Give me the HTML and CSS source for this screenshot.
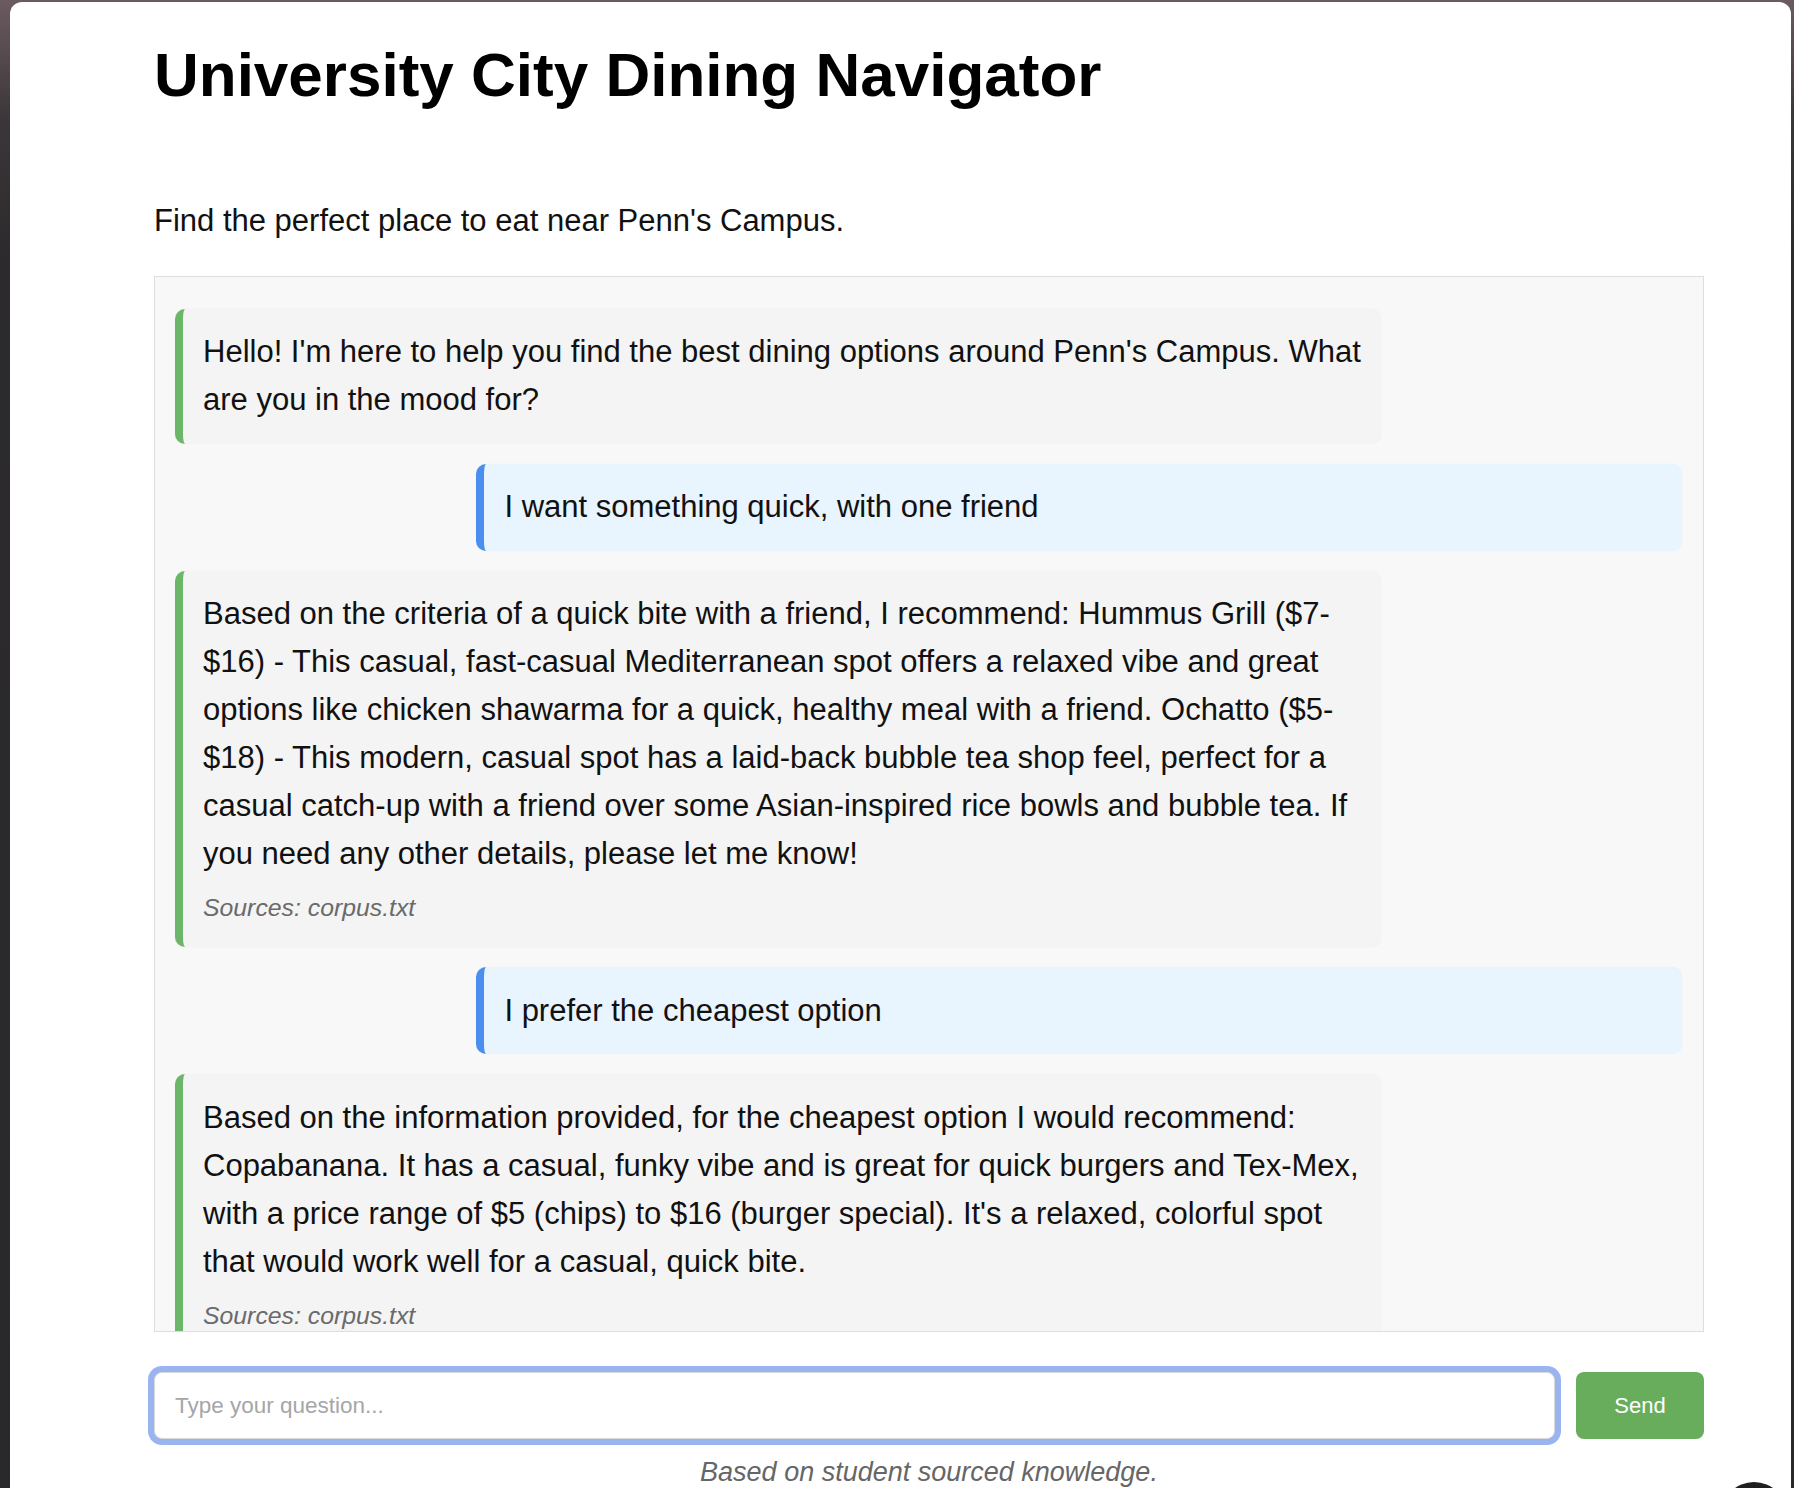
FILE: index.html
```html
<!DOCTYPE html>
<html lang="en">
<head>
<meta charset="utf-8">
<title>University City Dining Navigator</title>
<link rel="stylesheet" href="styles.css">
</head>
<body>
<div class="window">
  <main class="app">
    <h1 class="title">University City Dining Navigator</h1>
    <p class="subtitle">Find the perfect place to eat near Penn's Campus.</p>
    <div class="chat">
      <div class="msg bot">
        <div class="text">Hello! I'm here to help you find the best dining options around Penn's Campus. What are you in the mood for?</div>
      </div>
      <div class="msg user">
        <div class="text">I want something quick, with one friend</div>
      </div>
      <div class="msg bot">
        <div class="text">Based on the criteria of a quick bite with a friend, I recommend: Hummus Grill ($7-<wbr>$16) - This casual, fast-casual Mediterranean spot offers a relaxed vibe and great options like chicken shawarma for a quick, healthy meal with a friend. Ochatto ($5-<wbr>$18) - This modern, casual spot has a laid-back bubble tea shop feel, perfect for a casual catch-up with a friend over some Asian-inspired rice bowls and bubble tea. If you need any other details, please let me know!</div>
        <div class="sources">Sources: corpus.txt</div>
      </div>
      <div class="msg user">
        <div class="text">I prefer the cheapest option</div>
      </div>
      <div class="msg bot">
        <div class="text">Based on the information provided, for the cheapest option I would recommend: Copabanana. It has a casual, funky vibe and is great for quick burgers and Tex-Mex, with a price range of $5 (chips) to $16 (burger special). It's a relaxed, colorful spot that would work well for a casual, quick bite.</div>
        <div class="sources">Sources: corpus.txt</div>
      </div>
    </div>
    <form class="composer">
      <input class="input" type="text" placeholder="Type your question...">
      <button class="send" type="button">Send</button>
    </form>
    <p class="footnote">Based on student sourced knowledge.</p>
  </main>
</div>
<div class="fab"></div>
</body>
</html>
```
FILE: styles.css
```css
html, body {
  margin: 0;
  padding: 0;
}

body {
  width: 1794px;
  height: 1488px;
  overflow: hidden;
  position: relative;
  background: linear-gradient(180deg, #6b5b61 0, #3b3639 120px, #2c2a2c 260px, #29292b 100%);
  font-family: "Liberation Sans", Arial, sans-serif;
  color: #111;
}

.window {
  margin: 2px 3px 0 10px;
  height: 1486px;
  box-sizing: border-box;
  padding-top: 37px;
  background: #fff;
  border-radius: 12px 12px 0 0;
}

.app {
  margin-left: 144px;
  width: 1550px;
}

.title {
  margin: 0;
  font-size: 62px;
  line-height: 72px;
  font-weight: 700;
  color: #000;
}

.subtitle {
  margin: 86px 0 0;
  font-size: 31px;
  line-height: 48px;
  color: #111;
}

.chat {
  margin-top: 31px;
  height: 1056px;
  box-sizing: border-box;
  border: 1px solid #dedede;
  background: #f8f8f8;
  padding: 32px 21px 0 20px;
  overflow: hidden;
  display: flex;
  flex-direction: column;
  gap: 20px;
}

.msg {
  flex-shrink: 0;
  width: 80%;
  box-sizing: border-box;
  padding: 19.4px 18px 19.4px 20px;
  border-left: 8px solid;
  border-radius: 10px;
  font-size: 31px;
  line-height: 48px;
  color: #111;
  box-shadow: 0 0 1px rgba(0, 0, 0, 0.08);
}

.bot {
  align-self: flex-start;
  background: #f4f4f4;
  border-left-color: #6cb669;
}

.user {
  align-self: flex-end;
  background: #e8f4fe;
  border-left-color: #4a8ff0;
}

.sources {
  margin-top: 10px;
  font-size: 24.8px;
  line-height: 40px;
  font-style: italic;
  color: #6a6a6a;
}

.composer {
  margin: 40px 0 0;
  display: flex;
  gap: 21px;
}

.input {
  flex: 1;
  height: 67px;
  box-sizing: border-box;
  border: 1.5px solid #d9d9d9;
  border-radius: 8px;
  padding: 0 20px;
  font-family: "Liberation Sans", Arial, sans-serif;
  font-size: 22.5px;
  color: #111;
  background: #fff;
  outline: none;
  box-shadow: 0 0 0 6px #9ab4ef;
}

.input::placeholder {
  color: #a6a6a6;
}

.send {
  width: 128px;
  height: 67px;
  border: none;
  border-radius: 8px;
  background: #68ad5c;
  color: #fff;
  font-family: "Liberation Sans", Arial, sans-serif;
  font-size: 22px;
  padding: 0;
}

.footnote {
  margin: 13px 0 0;
  text-align: center;
  font-size: 27px;
  line-height: 40px;
  font-style: italic;
  color: #666;
}

.fab {
  position: absolute;
  left: 1721px;
  top: 1482px;
  width: 66px;
  height: 66px;
  border-radius: 50%;
  background: #1f1f1f;
}
```
